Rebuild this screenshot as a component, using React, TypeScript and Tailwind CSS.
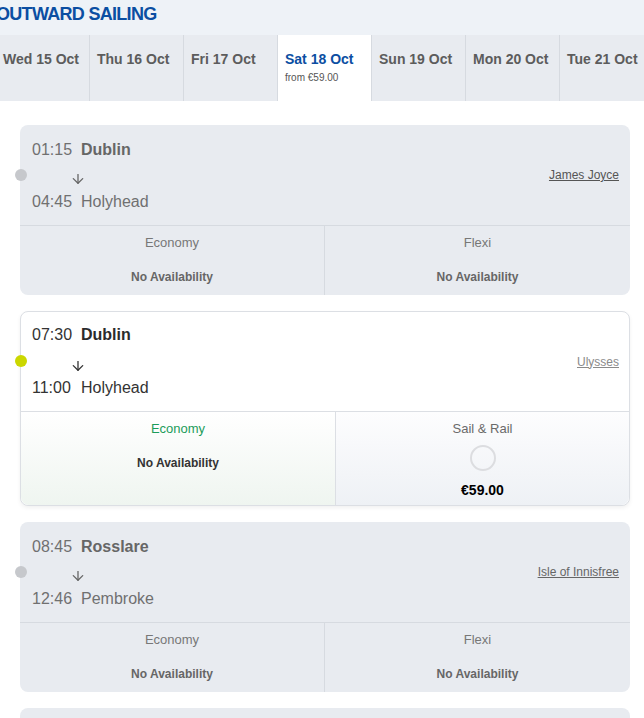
import React from "react";

const days = [
  { label: "Wed 15 Oct" },
  { label: "Thu 16 Oct" },
  { label: "Fri 17 Oct" },
  { label: "Sat 18 Oct", active: true, from: "from €59.00" },
  { label: "Sun 19 Oct" },
  { label: "Mon 20 Oct" },
  { label: "Tue 21 Oct" },
];

function Arrow({ color }: { color: string }) {
  return (
    <svg width="12" height="10" viewBox="0 0 12 10" fill="none" stroke={color} strokeWidth="1.3" strokeLinecap="round" strokeLinejoin="round">
      <path d="M6 0.6V9.2" />
      <path d="M1.3 4.6L6 9.3L10.7 4.6" />
    </svg>
  );
}

function GrayCard({ dep, from, arr, to, ship, shipColor, right }: { dep: string; from: string; arr: string; to: string; ship: string; shipColor: string; right: string }) {
  return (
    <div className="relative h-[170px] w-[610px] shrink-0 rounded-lg bg-[#e8ebf0]">
      <div className="absolute -left-[5px] top-[44px] h-[12px] w-[12px] rounded-full bg-[#c6c8cc]" />
      <div className="flex h-[100px] items-center justify-between pl-[12px] pr-[11px]">
        <div className="flex h-full flex-col pt-[14px]">
          <div className="flex h-[22px] items-center text-[16px] leading-[22px]">
            <span className="w-[49px] text-[#707070]">{dep}</span>
            <span className="font-bold text-[#666666]">{from}</span>
          </div>
          <div className="ml-[40px] mt-[13px] h-[10px]">
            <Arrow color="#666666" />
          </div>
          <div className="mt-[7px] flex h-[22px] items-center text-[16px] leading-[22px] text-[#707070]">
            <span className="w-[49px]">{arr}</span>
            <span>{to}</span>
          </div>
        </div>
        <span className={`text-[12px] leading-[14px] underline ${shipColor}`}>{ship}</span>
      </div>
      <div className="flex h-[70px] border-t border-[#d6dae0]">
        <div className="flex w-[305px] flex-col items-center border-r border-[#d6dae0] pt-[9px]">
          <span className="h-[16px] text-[13px] leading-[16px] text-[#777777]">Economy</span>
          <span className="mt-[18px] h-[16px] text-[12px] font-bold leading-[16px] text-[#666666]">No Availability</span>
        </div>
        <div className="flex flex-1 flex-col items-center pt-[9px]">
          <span className="h-[16px] text-[13px] leading-[16px] text-[#777777]">{right}</span>
          <span className="mt-[18px] h-[16px] text-[12px] font-bold leading-[16px] text-[#666666]">No Availability</span>
        </div>
      </div>
    </div>
  );
}

function ActiveCard() {
  return (
    <div className="relative h-[195px] w-[610px] shrink-0 rounded-lg border border-[#dcdfe4] bg-white shadow-[0_2px_4px_rgba(0,0,0,0.06)]">
      <div className="absolute -left-[6px] top-[43px] h-[12px] w-[12px] rounded-full bg-[#cbd700]" />
      <div className="flex h-[99px] items-center justify-between pl-[11px] pr-[10px]">
        <div className="flex h-full flex-col pt-[12px]">
          <div className="flex h-[22px] items-center text-[16px] leading-[22px]">
            <span className="w-[49px] text-[#333333]">07:30</span>
            <span className="font-bold text-[#2b2b2b]">Dublin</span>
          </div>
          <div className="ml-[40px] mt-[15px] h-[10px]">
            <Arrow color="#333333" />
          </div>
          <div className="mt-[6px] flex h-[22px] items-center text-[16px] leading-[22px] text-[#333333]">
            <span className="w-[49px]">11:00</span>
            <span>Holyhead</span>
          </div>
        </div>
        <span className="text-[12px] leading-[14px] text-[#8a8a8a] underline">Ulysses</span>
      </div>
      <div className="flex h-[94px] overflow-hidden rounded-b-lg border-t border-[#dcdfe4]">
        <div className="flex w-[315px] flex-col items-center border-r border-[#dcdfe4] bg-linear-to-b from-white to-[#eff5f0] pt-[9px]">
          <span className="h-[16px] text-[13px] leading-[16px] text-[#1c9c5a]">Economy</span>
          <span className="mt-[18px] h-[16px] text-[12px] font-bold leading-[16px] text-[#333333]">No Availability</span>
        </div>
        <div className="flex flex-1 flex-col items-center bg-linear-to-b from-[#fdfdfe] to-[#eef1f5] pt-[9px]">
          <span className="h-[16px] text-[13px] leading-[16px] text-[#6a6a6a]">Sail &amp; Rail</span>
          <span className="mt-[8px] h-[26px] w-[26px] rounded-full border-2 border-[#dcdde0]" />
          <span className="mt-[11px] h-[16px] text-[14px] font-bold leading-[16px] text-black">€59.00</span>
        </div>
      </div>
    </div>
  );
}

export default function App() {
  return (
    <div className="h-[718px] w-[644px] overflow-hidden bg-white font-['Liberation_Sans',Arial,sans-serif]">
      <div className="-ml-[4px] w-[660px]">
        <div className="h-[35px] bg-[#eef2f7] pt-[4px]">
          <h1 className="text-[18px] font-bold leading-[20px] tracking-[-0.7px] text-[#0b4ea2]">OUTWARD SAILING</h1>
        </div>
        <div className="flex h-[66px] bg-[#e8ebf0]">
          {days.map((d) => (
            <div
              key={d.label}
              className={`flex h-full w-[94px] shrink-0 flex-col border-r border-[#d6dae0] pl-[7px] pt-[16px] ${d.active ? "bg-white" : "bg-[#e8ebf0]"}`}
            >
              <span className={`h-[16px] whitespace-nowrap text-[14px] font-bold leading-[16px] ${d.active ? "text-[#0b4ea2]" : "text-[#5c5c5c]"}`}>{d.label}</span>
              {d.from && <span className="mt-[5px] h-[12px] text-[10px] leading-[12px] text-[#555555]">{d.from}</span>}
            </div>
          ))}
        </div>
        <div className="ml-[24px] flex flex-col gap-[16px] pt-[24px]">
          <GrayCard dep="01:15" from="Dublin" arr="04:45" to="Holyhead" ship="James Joyce" shipColor="text-[#555555]" right="Flexi" />
          <ActiveCard />
          <GrayCard dep="08:45" from="Rosslare" arr="12:46" to="Pembroke" ship="Isle of Innisfree" shipColor="text-[#666666]" right="Flexi" />
          <div className="h-[170px] w-[610px] shrink-0 rounded-lg bg-[#e8ebf0]" />
        </div>
      </div>
    </div>
  );
}
